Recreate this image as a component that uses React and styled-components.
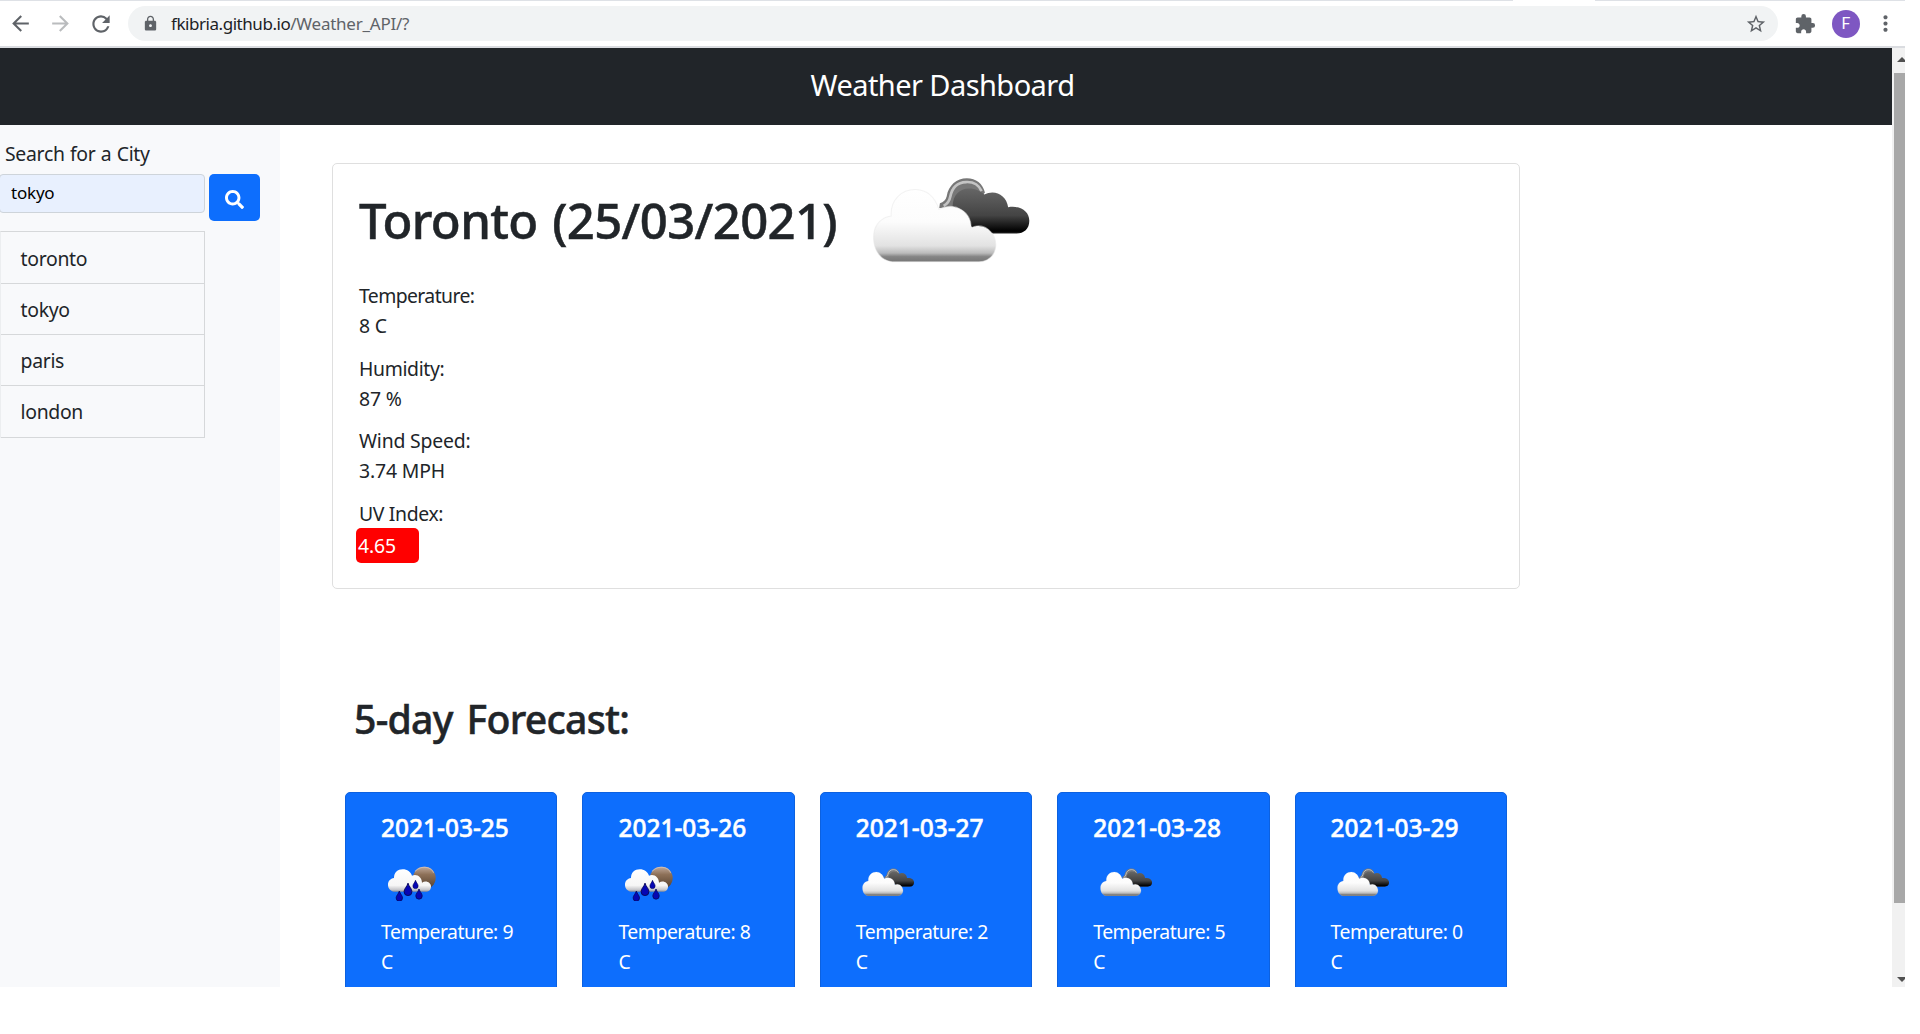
import React from 'react';
import styled, { createGlobalStyle } from 'styled-components';
import { FaSearch } from 'react-icons/fa';
import {
  MdArrowBack, MdArrowForward, MdRefresh, MdLock, MdStarBorder, MdExtension, MdMoreVert,
} from 'react-icons/md';

const GlobalStyle = createGlobalStyle`
  *, *::before, *::after { box-sizing: border-box; }
  body {
    margin: 0;
    background: #fff;
    color: #212529;
    font-family: "Noto Sans", "Open Sans", sans-serif;
    font-size: 19.4px;
    line-height: 30px;
    overflow: hidden;
  }
  h1, h2, h3 { margin: 0; font-weight: 500; -webkit-text-stroke: 0.5px currentColor; }
  ul, p { margin: 0; padding: 0; }
`;

const Browser = styled.div`
  width: 1905px;
  height: 987px;
  display: flex;
  flex-direction: column;
  overflow: hidden;
`;

/* Browser chrome */
const TabStrip = styled.div`
  flex: none;
  height: 1px;
  display: flex;
  justify-content: space-between;
  &::before { content: ''; width: 1513px; background: #dee1e6; }
  &::after { content: ''; width: 310px; background: #dee1e6; }
`;

const Toolbar = styled.div`
  flex: none;
  height: 47px;
  padding: 0 7px 0 8px;
  display: flex;
  align-items: center;
  border-bottom: 2px solid #dadce0;
  color: #5f6368;
`;

const NavButtons = styled.div`
  width: 120px;
  display: flex;
  align-items: center;
  gap: 15px;
`;

const NavIcon = styled.span`
  display: flex;
  color: ${(p) => (p.$disabled ? '#babcbe' : '#5f6368')};
`;

const AddressBar = styled.div`
  width: 1650px;
  height: 35px;
  padding: 0 11px 0 14px;
  display: flex;
  align-items: center;
  border-radius: 18px;
  background: #f1f3f4;
  font-size: 17px;
  line-height: 24px;
`;

const Host = styled.span`
  margin-left: 12px;
  color: #202124;
  letter-spacing: -0.45px;
`;

const Path = styled.span`
  flex: 1;
  color: #5f6368;
  letter-spacing: -0.25px;
`;

const ChromeActions = styled.div`
  flex: 1;
  padding-left: 16px;
  display: flex;
  align-items: center;
  justify-content: space-between;
`;

const Avatar = styled.span`
  width: 28px;
  height: 28px;
  margin-left: 3px;
  border-radius: 50%;
  background: #7e57c2;
  color: #fff;
  font: 400 16px/28px Roboto, sans-serif;
  text-align: center;
`;

const Viewport = styled.div`
  flex: 1;
  min-height: 0;
  display: flex;
`;

const Page = styled.div`
  width: 1892px;
  display: flex;
  flex-direction: column;
  overflow: hidden;
`;

const Scrollbar = styled.div`
  flex: 1;
  display: flex;
  flex-direction: column;
  justify-content: space-between;
  padding: 9px 0 5px;
  background: #f1f1f1;
  overflow: hidden;
`;

const ScrollArrow = styled.span`
  width: 0;
  margin-left: 5px;
  border: 5px solid transparent;
  border-${(p) => (p.$up ? 'top' : 'bottom')}: 0;
  border-${(p) => (p.$up ? 'bottom' : 'top')}-color: #505050;
`;

const Thumb = styled.div`
  height: 830px;
  margin: 11px 0 auto 2px;
  background: #a8a8a8;
`;

/* Dashboard */
const Header = styled.header`
  flex: none;
  height: 77px;
  padding: 0 7px 4px 0;
  display: flex;
  align-items: center;
  justify-content: center;
  background: #212529;
  color: #fff;
  font-size: 29px;
  letter-spacing: -0.56px;
`;

const Body = styled.div`
  flex: 1;
  min-height: 0;
  display: flex;
`;

const Sidebar = styled.aside`
  flex: none;
  width: 280px;
  padding-top: 14px;
  background: #f8f9fb;
`;

const Label = styled.label`
  display: block;
  padding-left: 5px;
  letter-spacing: -0.3px;
  word-spacing: 0.6px;
`;

const SearchRow = styled.form`
  margin: 5px 0 10px -1px;
  display: flex;
  align-items: flex-start;
  gap: 4px;
`;

const SearchInput = styled.input`
  width: 206px;
  height: 39px;
  padding: 0 11px 2px;
  border: 1px solid #ced4da;
  border-radius: 4px;
  background: #e8f0fe;
  color: #000;
  font: 17px "Noto Sans", sans-serif;
  letter-spacing: -0.2px;
  outline: none;
`;

const SearchButton = styled.button`
  width: 51px;
  height: 47px;
  padding: 4px 0 0;
  display: flex;
  align-items: center;
  justify-content: center;
  border: 0;
  border-radius: 5px;
  background: #0d6efd;
  color: #fff;
`;

const History = styled.ul`
  width: 205px;
  list-style: none;
  border: 1px solid #d6d8da;
  border-left-color: #eceef0;
  border-bottom: 0;
`;

const HistoryItem = styled.li`
  height: 51px;
  padding: 10.5px 19.5px 0;
  border-bottom: 1px solid #d6d8da;
  letter-spacing: -0.3px;
  &:first-child { height: 52px; padding-top: 12px; }
  &:last-child { height: 52px; }
`;

const Main = styled.main`
  padding: 38px 0 0 52px;
`;

const CurrentCard = styled.section`
  width: 1188px;
  height: 426px;
  padding: 13px 26px 0;
  border: 1px solid #dfdfdf;
  border-radius: 5px;
`;

const CurrentHead = styled.div`
  height: 104px;
  display: flex;
  align-items: flex-start;
`;

const City = styled.h1`
  width: 513px;
  margin-top: 13px;
  white-space: nowrap;
  font-size: 49px;
  line-height: 60px;
  letter-spacing: -0.65px;
  word-spacing: 2.5px;
`;

const Reading = styled.div`
  height: 72.6px;
`;

const ReadingText = styled.p`
  letter-spacing: ${(p) => p.$track || 0}px;
`;

const UvBadge = styled.span`
  display: block;
  width: 63px;
  height: 35px;
  margin: -1px 0 0 -3px;
  padding: 3px 2px;
  border-radius: 5px;
  background: #f00;
  color: #fff;
  letter-spacing: -0.1px;
`;

const ForecastTitle = styled.h2`
  margin: 106px 0 49px 22px;
  font-size: 39.2px;
  line-height: 48px;
  letter-spacing: -0.75px;
  word-spacing: 4.5px;
`;

const ForecastGrid = styled.div`
  width: 1162px;
  margin-left: 13px;
  display: grid;
  grid-template-columns: repeat(5, 1fr);
  gap: 25px;
`;

const DayCard = styled.article`
  height: 260px;
  padding: 20px 35px;
  border: 1px solid #0c61e0;
  border-radius: 5px;
  background: #0d6efd;
  color: #fff;
`;

const DayDate = styled.h3`
  font-size: 24.5px;
  line-height: 30px;
  white-space: nowrap;
`;

const DayIcon = styled.div`
  height: 73.5px;
  padding: ${(p) => (p.$rain ? '23px 0 0 7px' : '24.5px 0 0 6.5px')};
  line-height: 0;
`;

function CloudIcon({ width, id }) {
  return (
    <svg width={width} height={(width * 256) / 470} viewBox="70 80 470 256">
      <defs>
        <linearGradient id={`${id}w`} x1="0" y1="0" x2="0" y2="1">
          <stop offset="0" stopColor="#fff" />
          <stop offset="0.45" stopColor="#fcfcfc" />
          <stop offset="0.78" stopColor="#e2e2e2" />
          <stop offset="0.88" stopColor="#bcbcbc" />
          <stop offset="0.93" stopColor="#858585" />
          <stop offset="1" stopColor="#777" />
        </linearGradient>
        <linearGradient id={`${id}d`} x1="0" y1="0" x2="0" y2="1">
          <stop offset="0" stopColor="#666" />
          <stop offset="0.6" stopColor="#444" />
          <stop offset="0.95" stopColor="#000" />
          <stop offset="1" stopColor="#222" />
        </linearGradient>
      </defs>
      <path d="M270 172 L272 158 Q288 154 292 138 C298 104 322 84 352 84 C380 84 399 100 406 126 L370 170Z" fill="#777" />
      <path d="M283 166 Q299 158 303 138 C308 112 325 96 350 95 C372 94 388 104 396 122" fill="none" stroke="#c4c4c4" strokeWidth="8" />
      <path d="M310 172 C308 135 330 114 358 114 C378 114 394 122 404 132 C434 116 470 132 475 170 C508 164 538 180 538 210 C538 234 522 248 500 248 L430 248 L370 232Z" fill={`url(#${id}d)`} />
      <path d="M130 332 C92 328 72 292 75 252 C77 222 98 200 127 196 C124 148 158 116 200 117 C236 118 258 142 269 176 C318 152 366 184 365 231 C404 212 442 248 438 288 C435 314 414 332 388 332Z" fill={`url(#${id}w)`} stroke="#e8e8e8" strokeOpacity="0.5" strokeWidth="3" />
    </svg>
  );
}

function RainIcon({ id }) {
  const drop = (x, y, s) => (
    <path
      transform={`translate(${x} ${y}) scale(${s})`}
      d="M0 -20 C3 -9 12 -3 12 6 A12 12 0 0 1 -12 6 C-12 -3 -3 -9 0 -20Z"
      fill="#0606b4"
      stroke="#07075c"
      strokeWidth="3"
    />
  );
  return (
    <svg width="48.7" height="34.7" viewBox="36 36 146 104">
      <defs>
        <linearGradient id={`${id}m`} x1="0" y1="0" x2="0" y2="1">
          <stop offset="0" stopColor="#c0aa9c" />
          <stop offset="0.35" stopColor="#8d7058" />
          <stop offset="1" stopColor="#503c2c" />
        </linearGradient>
        <linearGradient id={`${id}c`} x1="0" y1="0" x2="0" y2="1">
          <stop offset="0" stopColor="#fff" />
          <stop offset="0.72" stopColor="#f6f6f6" />
          <stop offset="0.92" stopColor="#c4c4c8" />
          <stop offset="1" stopColor="#888c98" />
        </linearGradient>
      </defs>
      <circle cx="145" cy="72" r="34" fill={`url(#${id}m)`} />
      <path d="M117 52 Q130 38 148 40 Q166 42 173 56" fill="none" stroke="#d8c8bd" strokeWidth="3" opacity="0.7" />
      <path d="M54 113 C42 111 36 102 36 92 C36 81 43 74 54 72 C54 56 65 46 80 46 C94 46 104 54 108 65 C124 59 137 70 138 86 C150 78 165 86 165 98 C165 107 158 113 149 113Z" fill={`url(#${id}c)`} />
      {drop(96, 107, 0.98)}
      {drop(118.5, 92, 0.65)}
      {drop(70, 127, 0.8)}
      {drop(129, 121, 0.8)}
    </svg>
  );
}

const cities = ['toronto', 'tokyo', 'paris', 'london'];

const readings = [
  { label: 'Temperature:', value: '8 C', track: -0.6 },
  { label: 'Humidity:', value: '87 %', track: -0.35 },
  { label: 'Wind Speed:', value: '3.74 MPH', track: -0.18 },
];

const days = [
  { date: '2021-03-25', temp: 9, rain: true },
  { date: '2021-03-26', temp: 8, rain: true },
  { date: '2021-03-27', temp: 2 },
  { date: '2021-03-28', temp: 5 },
  { date: '2021-03-29', temp: 0 },
];

export default function App() {
  return (
    <>
      <GlobalStyle />
      <Browser>
        <TabStrip />
        <Toolbar>
          <NavButtons>
            <NavIcon><MdArrowBack size={25} /></NavIcon>
            <NavIcon $disabled><MdArrowForward size={25} /></NavIcon>
            <NavIcon><MdRefresh size={26} /></NavIcon>
          </NavButtons>
          <AddressBar>
            <MdLock size={17} />
            <Host>fkibria.github.io</Host>
            <Path>/Weather_API/?</Path>
            <MdStarBorder size={22} />
          </AddressBar>
          <ChromeActions>
            <MdExtension size={22} />
            <Avatar>F</Avatar>
            <MdMoreVert size={25} />
          </ChromeActions>
        </Toolbar>
        <Viewport>
          <Page>
            <Header>Weather Dashboard</Header>
            <Body>
              <Sidebar>
                <Label>Search for a City</Label>
                <SearchRow>
                  <SearchInput defaultValue="tokyo" />
                  <SearchButton type="button"><FaSearch size={19} /></SearchButton>
                </SearchRow>
                <History>
                  {cities.map((city) => <HistoryItem key={city}>{city}</HistoryItem>)}
                </History>
              </Sidebar>
              <Main>
                <CurrentCard>
                  <CurrentHead>
                    <City>Toronto (25/03/2021)</City>
                    <CloudIcon width={158} id="now" />
                  </CurrentHead>
                  {readings.map((r) => (
                    <Reading key={r.label}>
                      <ReadingText $track={r.track}>{r.label}</ReadingText>
                      <ReadingText $track={-0.15}>{r.value}</ReadingText>
                    </Reading>
                  ))}
                  <Reading>
                    <ReadingText $track={-0.35}>UV Index:</ReadingText>
                    <UvBadge>4.65</UvBadge>
                  </Reading>
                </CurrentCard>
                <ForecastTitle>5-day Forecast:</ForecastTitle>
                <ForecastGrid>
                  {days.map((d) => (
                    <DayCard key={d.date}>
                      <DayDate>{d.date}</DayDate>
                      <DayIcon $rain={d.rain}>
                        {d.rain ? <RainIcon id={`r${d.temp}`} /> : <CloudIcon width={52.3} id={`c${d.temp}`} />}
                      </DayIcon>
                      <ReadingText $track={-0.48}>Temperature: {d.temp} C</ReadingText>
                    </DayCard>
                  ))}
                </ForecastGrid>
              </Main>
            </Body>
          </Page>
          <Scrollbar>
            <ScrollArrow $up />
            <Thumb />
            <ScrollArrow />
          </Scrollbar>
        </Viewport>
      </Browser>
    </>
  );
}
